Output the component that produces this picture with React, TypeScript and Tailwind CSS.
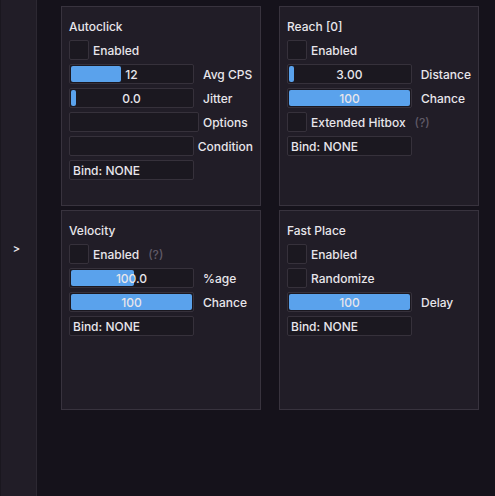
import React from 'react';

type Row =
  | { kind: 'check'; label: string; help?: boolean }
  | { kind: 'slider'; value: string; fill: number; label: string }
  | { kind: 'combo'; label: string }
  | { kind: 'bind' };

const modules: { title: string; rows: Row[] }[] = [
  {
    title: 'Autoclick',
    rows: [
      { kind: 'check', label: 'Enabled' },
      { kind: 'slider', value: '12', fill: 50, label: 'Avg CPS' },
      { kind: 'slider', value: '0.0', fill: 5, label: 'Jitter' },
      { kind: 'combo', label: 'Options' },
      { kind: 'combo', label: 'Condition' },
      { kind: 'bind' },
    ],
  },
  {
    title: 'Reach [0]',
    rows: [
      { kind: 'check', label: 'Enabled' },
      { kind: 'slider', value: '3.00', fill: 5, label: 'Distance' },
      { kind: 'slider', value: '100', fill: 121, label: 'Chance' },
      { kind: 'check', label: 'Extended Hitbox', help: true },
      { kind: 'bind' },
    ],
  },
  {
    title: 'Velocity',
    rows: [
      { kind: 'check', label: 'Enabled', help: true },
      { kind: 'slider', value: '100.0', fill: 63, label: '%age' },
      { kind: 'slider', value: '100', fill: 121, label: 'Chance' },
      { kind: 'bind' },
    ],
  },
  {
    title: 'Fast Place',
    rows: [
      { kind: 'check', label: 'Enabled' },
      { kind: 'check', label: 'Randomize' },
      { kind: 'slider', value: '100', fill: 121, label: 'Delay' },
      { kind: 'bind' },
    ],
  },
];

function Control({ row }: { row: Row }) {
  if (row.kind === 'check') {
    return (
      <div className="flex h-5 items-center">
        <div className="h-5 w-5 rounded-[2px] border border-[#36313b] bg-[#1b1820]" />
        <span className="relative top-px ml-1">{row.label}</span>
        {row.help && <span className="relative top-px ml-[9px] text-[#5f5966]">(?)</span>}
      </div>
    );
  }
  if (row.kind === 'slider') {
    return (
      <div className="flex h-5 items-center">
        <div className="relative h-5 w-[125px] rounded-[2px] border border-[#36313b] bg-[#1b1820]">
          <div
            className="absolute left-[1px] top-[1px] bottom-[1px] rounded-[2px] bg-[#5aa2ec]"
            style={{ width: row.fill }}
          />
          <div className="relative top-px flex h-full items-center justify-center">{row.value}</div>
        </div>
        <span className="relative top-px ml-[9px]">{row.label}</span>
      </div>
    );
  }
  if (row.kind === 'combo') {
    return (
      <div className="flex h-5 items-center">
        <div className="h-5 w-[130px] rounded-[2px] border border-[#36313b] bg-[#1b1820]" />
        <span className="relative top-px ml-1">{row.label}</span>
      </div>
    );
  }
  return (
    <div className="flex h-5 w-[125px] items-center rounded-[2px] border border-[#36313b] bg-[#1b1820] px-[3px]">
      <span className="relative top-px">Bind: NONE</span>
    </div>
  );
}

export default function App() {
  return (
    <div
      className="flex h-[496px] w-[495px] overflow-hidden bg-[#15121b] text-[12px] font-medium text-[#e8e6eb]"
      style={{ fontFamily: 'Inter, "Noto Sans", sans-serif' }}
    >
      {/* sidebar */}
      <div className="flex w-[37px] shrink-0 items-center justify-center border-r border-[#2c2832] border-l border-l-[#1a171f] bg-[#211d27] pr-[4px]">
        <span className="text-[11px] font-semibold">&gt;</span>
      </div>

      {/* module grid */}
      <div className="grid grid-cols-[200px_200px] content-start gap-x-[18px] gap-y-1 pl-6 pt-[6px]">
        {modules.map((m) => (
          <div key={m.title} className="h-[200px] border border-[#38333e] bg-[#211d27] px-[7px] pt-[12px]">
            <div className="h-4 leading-4">{m.title}</div>
            <div className="mt-[5px] flex flex-col gap-1">
              {m.rows.map((r, i) => (
                <Control key={i} row={r} />
              ))}
            </div>
          </div>
        ))}
      </div>
    </div>
  );
}
